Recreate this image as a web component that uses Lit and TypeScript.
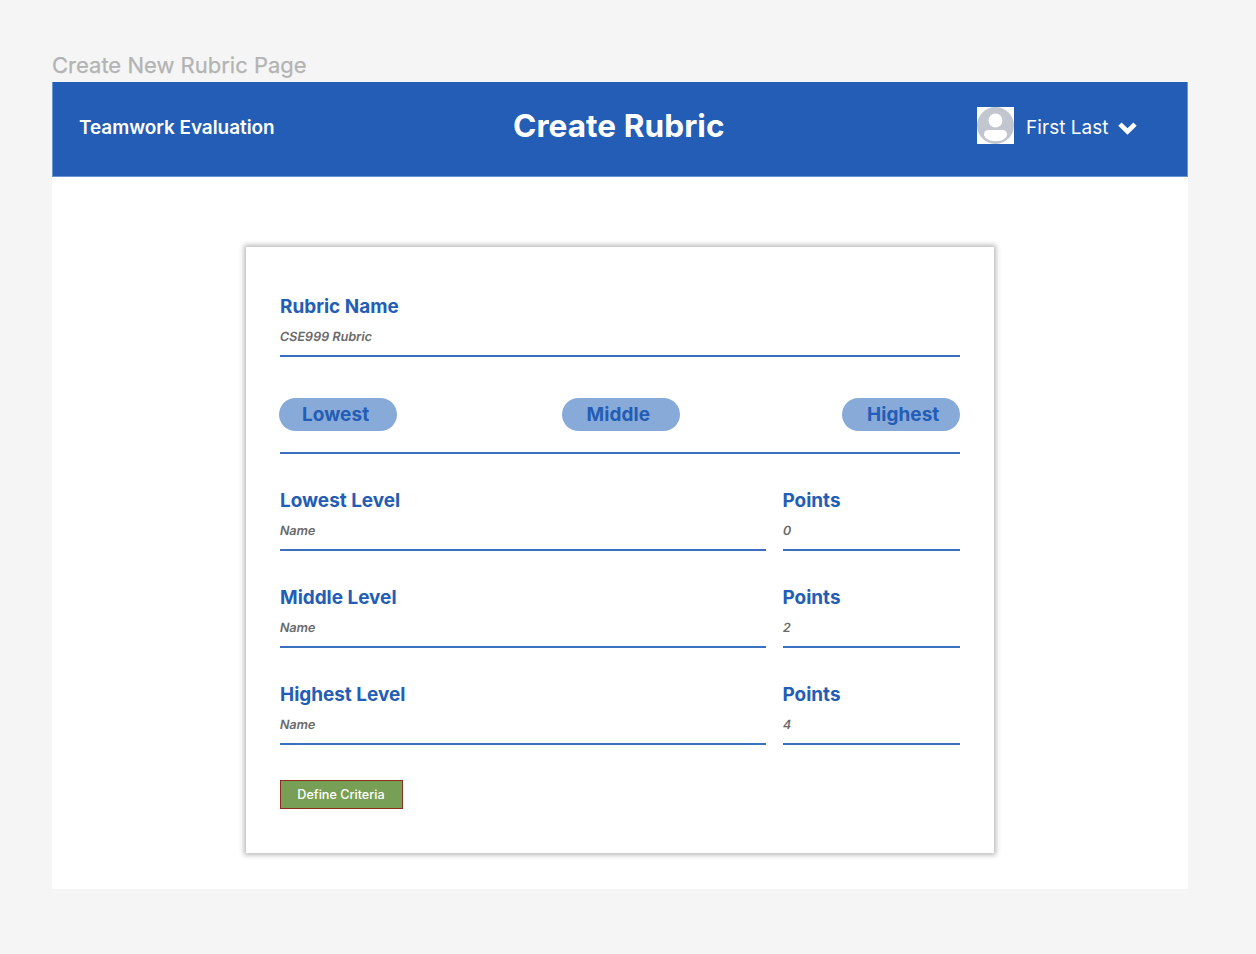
import { LitElement, html, css } from "lit";
import { customElement, property } from "lit/decorators.js";

@customElement("rubric-field")
class RubricField extends LitElement {
  @property() label = "";
  @property() value = "";

  static styles = css`
    :host {
      display: flex;
      flex-direction: column;
      align-items: flex-start;
      box-sizing: border-box;
      height: 62px;
      border-bottom: 2px solid #3a70bf;
    }
    .label {
      font-size: 18.93px;
      font-weight: 700;
      line-height: 23px;
      color: #235db5;
      white-space: nowrap;
    }
    .value {
      margin-top: 11px;
      font-size: 12.62px;
      font-weight: 600;
      line-height: 15px;
      color: #6a6a6a;
      white-space: nowrap;
      transform: skewX(-10deg);
    }
  `;

  render() {
    return html`<span class="label">${this.label}</span><span class="value">${this.value}</span>`;
  }
}

@customElement("app-root")
class AppRoot extends LitElement {
  levels = [
    { name: "Lowest", points: "0" },
    { name: "Middle", points: "2" },
    { name: "Highest", points: "4" },
  ];

  static styles = css`
    :host {
      display: block;
      box-sizing: border-box;
      height: 954px;
      padding: 52px 68px 0 52px;
      background: #f5f5f5;
      font-family: Inter, "Liberation Sans", sans-serif;
      overflow: hidden;
    }
    .caption {
      height: 30px;
      line-height: 27px;
      font-size: 22px;
      color: #b3b3b3;
      -webkit-text-stroke: 0.25px #b3b3b3;
      white-space: nowrap;
    }
    .page {
      width: 1136px;
      height: 807px;
      background: #fff;
    }
    .header {
      display: grid;
      grid-template-columns: 461px 1fr auto;
      align-items: center;
      box-sizing: border-box;
      width: 1136px;
      height: 95px;
      padding: 1px 50px 0 26px;
      background: #235db5;
      border: solid #6a96d2;
      border-width: 0 1px 1px 1px;
      color: #fff;
      white-space: nowrap;
    }
    .brand {
      font-size: 18.93px;
      font-weight: 600;
      line-height: 23px;
      margin-top: -4px;
      letter-spacing: -0.03px;
    }
    .title {
      font-size: 31.55px;
      font-weight: 700;
      line-height: 38px;
      margin: -8px 0 0 -27px;
      letter-spacing: 0.06px;
    }
    .user {
      display: flex;
      justify-content: flex-end;
      align-items: center;
      margin-top: -9px;
    }
    .avatar {
      display: block;
      width: 37px;
      height: 37px;
    }
    .name {
      margin: 5px 9.5px 0 12px;
      font-size: 18.93px;
      line-height: 23px;
      letter-spacing: 0.05px;
    }
    .chevron {
      display: block;
      width: 19px;
      height: 13px;
      margin-top: 6px;
    }
    .card {
      display: flex;
      flex-direction: column;
      box-sizing: border-box;
      width: 747.5px;
      height: 606px;
      margin: 70px 0 0 194px;
      padding: 48px 34px 0;
      background: #fff;
      box-shadow: 0 0 5px 2px rgba(0, 0, 0, 0.28);
    }
    .pills {
      display: grid;
      grid-template-columns: 118px 118px 118px;
      column-gap: 164.5px;
      box-sizing: border-box;
      height: 56px;
      margin: 41px 0 35px;
      border-bottom: 2px solid #3a70bf;
    }
    .pill {
      height: 33px;
      box-sizing: border-box;
      border-radius: 17px;
      margin-left: -1px;
      width: 118px;
      background: #88aad9;
      color: #235db5;
      font-size: 18.93px;
      font-weight: 700;
      line-height: 33px;
      padding-left: 23px;
      letter-spacing: 0.08px;
    }
    .pill.late {
      padding-left: 25px;
    }
    .pill.last {
      margin-left: -3px;
    }
    .row {
      display: grid;
      grid-template-columns: 486px 177px;
      column-gap: 16.5px;
      margin-bottom: 35px;
    }
    .button {
      width: 123px;
      height: 29px;
      box-sizing: border-box;
      border: 1px solid #8e2b1e;
      border-radius: 0;
      padding: 0 1px 0 0;
      background: #789f56;
      color: #fff;
      font-family: inherit;
      font-size: 12.62px;
      font-weight: 500;
    }
  `;

  render() {
    return html`
      <div class="caption">Create New Rubric Page</div>
      <main class="page">
        <header class="header">
          <div class="brand">Teamwork Evaluation</div>
          <h1 class="title">Create Rubric</h1>
          <div class="user">
            <svg class="avatar" viewBox="0 0 37 37">
              <rect width="37" height="37" fill="#fff" />
              <circle cx="18.5" cy="18.5" r="18.5" fill="#c2c6cf" />
              <circle cx="18.5" cy="13.5" r="6.9" fill="#fff" />
              <path d="M11.500 23h14c2.700 0 4.500 1.800 4.500 4.300 0 4.200-5.200 7-11.500 7s-11.500-2.800-11.500-7c0-2.500 1.800-4.300 4.500-4.300z" fill="#fff" />
            </svg>
            <span class="name">First Last</span>
            <svg class="chevron" viewBox="0 0 19 13">
              <path d="M0.300 3.700 3.600 0.500 9.500 6.200 15.400 0.500 18.700 3.700 9.500 12.800z" fill="#fff" />
            </svg>
          </div>
        </header>
        <section class="card">
          <rubric-field label="Rubric Name" value="CSE999 Rubric"></rubric-field>
          <div class="pills">
            ${this.levels.map(
              (l, i) => html`<div class="pill ${["", "late", "late last"][i]}">${l.name}</div>`
            )}
          </div>
          ${this.levels.map(
            (l) => html`<div class="row">
              <rubric-field label="${l.name} Level" value="Name"></rubric-field>
              <rubric-field label="Points" value=${l.points}></rubric-field>
            </div>`
          )}
          <button class="button">Define Criteria</button>
        </section>
      </main>
    `;
  }
}
